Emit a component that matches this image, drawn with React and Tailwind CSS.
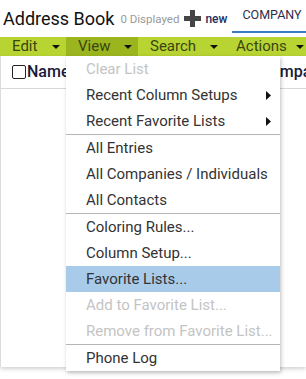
const Caret = () => (
  <svg width="8" height="4" viewBox="0 0 8 4" className="block">
    <path d="M0 0h8L4 4z" fill="#111" />
  </svg>
);

const SubArrow = () => (
  <svg width="5" height="9" viewBox="0 0 5 9" className="block">
    <path d="M0 0l5 4.5L0 9z" fill="#111" />
  </svg>
);

const menuGroups = [
  [
    { label: "Clear List", disabled: true },
    { label: "Recent Column Setups", sub: true },
    { label: "Recent Favorite Lists", sub: true },
  ],
  [{ label: "All Entries" }, { label: "All Companies / Individuals" }, { label: "All Contacts" }],
  [
    { label: "Coloring Rules..." },
    { label: "Column Setup..." },
    { label: "Favorite Lists...", active: true },
    { label: "Add to Favorite List...", disabled: true },
    { label: "Remove from Favorite List...", disabled: true },
  ],
  [{ label: "Phone Log" }],
];

const toolbar = [
  { label: "Edit", w: "w-[66px]" },
  { label: "View", w: "w-[72px]", open: true },
  { label: "Search", w: "w-[86px]" },
  { label: "Actions", w: "w-[86px]" },
];

export default function App() {
  return (
    <div className="relative h-[379px] w-[306px] overflow-hidden bg-white font-['Roboto',sans-serif]">
      {/* title bar */}
      <div className="flex h-[37px] items-center whitespace-nowrap pl-[3px]">
        <span className="text-[18px] leading-none text-[#111]">Address Book</span>
        <span className="ml-[6px] mt-[2px] text-[11.5px] text-[#999]">0 Displayed</span>
        <svg width="17" height="17" viewBox="0 0 17 17" className="ml-[5px] shrink-0">
          <path d="M6 0h5v6h6v5h-6v6H6v-6H0V6h6z" fill="#454545" />
        </svg>
        <span className="ml-[4px] mt-[1px] text-[12px] font-medium text-[#1c2f5e]">new</span>
        <div className="ml-[5px] flex h-[33px] shrink-0 items-center self-start border-b-2 border-[#3a7cc2] pl-[10px] pr-[10px]">
          <span className="text-[12.5px] text-[#2e2e4a]">COMPANY</span>
        </div>
      </div>

      {/* toolbar */}
      <div className="flex h-[19px] bg-[#b8d432] whitespace-nowrap">
        {toolbar.map((b) => (
          <div
            key={b.label}
            className={`flex shrink-0 items-center pl-[12px] pr-[6px] ${b.w} ${b.open ? "bg-[#9bb51f]" : ""}`}
          >
            <span className="text-[15px] leading-none text-[#3a4410]">{b.label}</span>
            <span className="ml-auto">
              <Caret />
            </span>
          </div>
        ))}
      </div>

      {/* list panel */}
      <div className="h-[311px] border-l border-[#dcdcdc] shadow-[0_2px_4px_rgba(0,0,0,0.18)]">
        <div className="flex h-[33px] items-center border-b border-[#d8d8d8] pl-[11px] whitespace-nowrap">
          <span className="h-[14px] w-[14px] shrink-0 rounded-[2px] border border-[#222] bg-white" />
          <span className="ml-px text-[16px] font-medium text-[#1a1a3a]">Name</span>
          <span className="ml-auto mr-[-22px] text-[16px] font-medium text-[#1a1a3a]">Company</span>
        </div>
      </div>

      {/* View dropdown */}
      <div className="absolute left-[66px] top-[56px] w-[214px] bg-white shadow-[1px_2px_4px_rgba(0,0,0,0.25)]">
        {menuGroups.map((group, gi) => (
          <div key={gi} className={gi > 0 ? "border-t border-[#b4b4b4]" : ""}>
            {group.map((item) => (
              <div
                key={item.label}
                className={`flex h-[26px] items-center pl-[20px] pr-[6px] whitespace-nowrap text-[15px] ${
                  item.active ? "bg-[#a8cbea]" : ""
                } ${item.disabled ? "text-[#c4c4c4]" : "text-[#333]"}`}
              >
                <span>{item.label}</span>
                {item.sub && (
                  <span className="ml-auto mr-[3px]">
                    <SubArrow />
                  </span>
                )}
              </div>
            ))}
          </div>
        ))}
      </div>
    </div>
  );
}
